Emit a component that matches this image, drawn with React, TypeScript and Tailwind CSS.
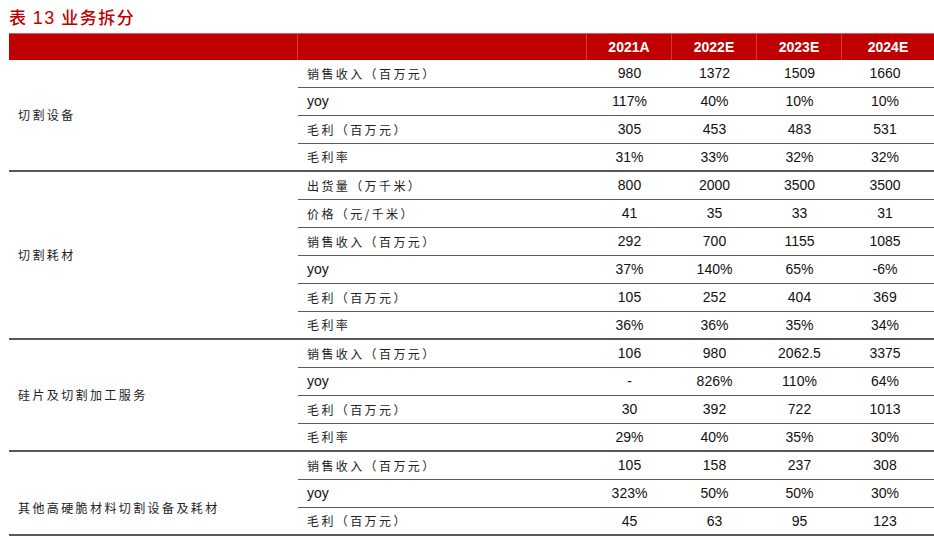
const YEARS = ["2021A", "2022E", "2023E", "2024E"];

type Row = { label: string; cells: string[] };
type Group = { name: string; rows: Row[]; labelPad?: string };

const GROUPS: Group[] = [
  {
    name: "切割设备",
    rows: [
      { label: "销售收入（百万元）", cells: ["980", "1372", "1509", "1660"] },
      { label: "yoy", cells: ["117%", "40%", "10%", "10%"] },
      { label: "毛利（百万元）", cells: ["305", "453", "483", "531"] },
      { label: "毛利率", cells: ["31%", "33%", "32%", "32%"] },
    ],
  },
  {
    name: "切割耗材",
    rows: [
      { label: "出货量（万千米）", cells: ["800", "2000", "3500", "3500"] },
      { label: "价格（元/千米）", cells: ["41", "35", "33", "31"] },
      { label: "销售收入（百万元）", cells: ["292", "700", "1155", "1085"] },
      { label: "yoy", cells: ["37%", "140%", "65%", "-6%"] },
      { label: "毛利（百万元）", cells: ["105", "252", "404", "369"] },
      { label: "毛利率", cells: ["36%", "36%", "35%", "34%"] },
    ],
  },
  {
    name: "硅片及切割加工服务",
    rows: [
      { label: "销售收入（百万元）", cells: ["106", "980", "2062.5", "3375"] },
      { label: "yoy", cells: ["-", "826%", "110%", "64%"] },
      { label: "毛利（百万元）", cells: ["30", "392", "722", "1013"] },
      { label: "毛利率", cells: ["29%", "40%", "35%", "30%"] },
    ],
  },
  {
    // table continues below the crop, so its label sits lower
    name: "其他高硬脆材料切割设备及耗材",
    labelPad: "pt-[30px]",
    rows: [
      { label: "销售收入（百万元）", cells: ["105", "158", "237", "308"] },
      { label: "yoy", cells: ["323%", "50%", "50%", "30%"] },
      { label: "毛利（百万元）", cells: ["45", "63", "95", "123"] },
    ],
  },
];

const cn = "font-['Noto_Sans_CJK_SC',sans-serif] text-[12px] tracking-[2.4px] text-[#222]";
const num = "font-['Liberation_Sans',Arial,sans-serif] text-[14px] text-[#111]";

export default function App() {
  return (
    <div className="w-[934px] bg-white">
      {/* Title */}
      <div className="h-[33px] pl-[9px] pt-[7px] font-['Noto_Sans_CJK_SC',sans-serif] text-[17px] font-medium leading-[20px] tracking-[1.5px] text-[#c00000]">
        表 <span className="font-['Liberation_Sans',Arial,sans-serif] text-[18px]">13</span> 业务拆分
      </div>

      <div className="ml-[9px] w-[925px]">
        {/* Header */}
        <div className="grid h-[27px] grid-cols-[289px_289px_85px_85px_85px_92px] border-t border-[#d85a5a] bg-[#c00000]">
          <div className="border-r border-[#cf3a3a]" />
          <div className="border-r border-[#cf3a3a]" />
          {YEARS.map((y, i) => (
            <div
              key={y}
              className={`flex items-center justify-center font-['Liberation_Sans',Arial,sans-serif] text-[14px] font-bold text-white ${
                i < 3 ? "border-r border-[#cf3a3a]" : ""
              }`}
            >
              {y}
            </div>
          ))}
        </div>

        {/* Body */}
        {GROUPS.map((g) => (
          <div key={g.name} className="flex">
            <div
              className={`flex w-[289px] shrink-0 items-center border-b-2 border-[#5a5a5a] pl-[9px] ${g.labelPad ?? ""} ${cn}`}
            >
              {g.name}
            </div>
            <div className="flex-1">
              {g.rows.map((r, ri) => (
                <div
                  key={r.label + ri}
                  className={`grid h-[28px] grid-cols-[289px_85px_85px_85px_92px] border-[#5a5a5a] ${
                    ri === g.rows.length - 1 ? "border-b-2" : "border-b"
                  }`}
                >
                  <div
                    className={`flex items-center pl-[9px] ${
                      r.label === "yoy" ? "font-['Liberation_Sans',Arial,sans-serif] text-[14px] text-[#111]" : cn
                    }`}
                  >
                    {r.label}
                  </div>
                  {r.cells.map((c, ci) => (
                    <div key={ci} className={`flex items-center justify-center ${num} ${ci === 3 ? "pr-[6px]" : ""}`}>
                      {c}
                    </div>
                  ))}
                </div>
              ))}
            </div>
          </div>
        ))}
      </div>
    </div>
  );
}
